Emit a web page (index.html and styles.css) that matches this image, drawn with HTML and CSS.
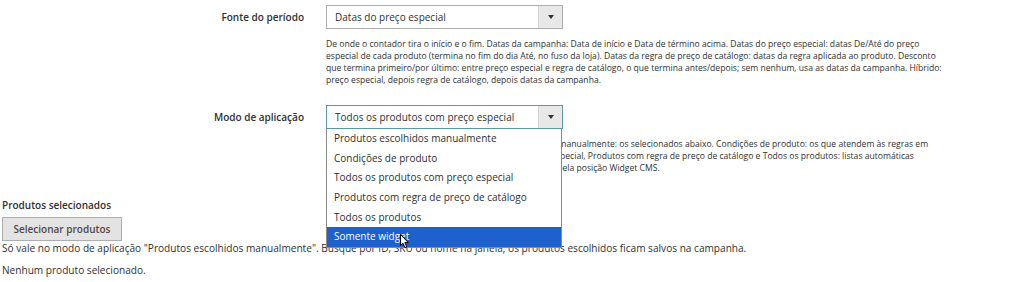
FILE: index.html
```html
<!DOCTYPE html>
<html lang="pt-BR">
<head>
<meta charset="UTF-8">
<title>Campanha - produtos</title>
<link rel="stylesheet" href="styles.css">
</head>
<body>
<div class="form">
    <div class="field">
        <div class="field-label">Fonte do período</div>
        <div class="field-control">
            <div class="select">
                <span class="select-value">Datas do preço especial</span>
                <span class="select-arrow"></span>
            </div>
            <div class="note">De onde o contador tira o início e o fim. Datas da campanha: Data de início e Data de término acima. Datas do preço especial: datas De/Até do preço especial de cada produto (termina no fim do dia Até, no fuso da loja). Datas da regra de preço de catálogo: datas da regra aplicada ao produto. Desconto que termina primeiro/por último: entre preço especial e regra de catálogo, o que termina antes/depois; sem nenhum, usa as datas da campanha. Híbrido: preço especial, depois regra de catálogo, depois datas da campanha.</div>
        </div>
    </div>

    <div class="field field-mode">
        <div class="field-label">Modo de aplicação</div>
        <div class="field-control">
            <div class="select select-focus">
                <span class="select-value">Todos os produtos com preço especial</span>
                <span class="select-arrow"></span>
            </div>
            <div class="note">Como os produtos entram na oferta. Produtos escolhidos manualmente: os selecionados abaixo. Condições de produto: os que atendem às regras em condições definidas aqui. Todos os produtos com preço especial, Produtos com regra de preço de catálogo e Todos os produtos: listas automáticas conforme o preço da loja. Somente widget: itens exibidos pela posição Widget CMS.</div>
            <ul class="options">
                <li>Produtos escolhidos manualmente</li>
                <li>Condições de produto</li>
                <li>Todos os produtos com preço especial</li>
                <li>Produtos com regra de preço de catálogo</li>
                <li>Todos os produtos</li>
                <li class="active">Somente widget</li>
            </ul>
            <svg class="cursor" width="10" height="15" viewBox="0 0 10 15">
                <path d="M0.5 0.5 L0.5 11.5 L3 9.2 L5 13.8 L6.8 13 L4.9 8.6 L8.3 8.6 Z" fill="#fff" stroke="#000" stroke-width="1"/>
            </svg>
        </div>
    </div>

    <div class="products">
        <div class="products-title">Produtos selecionados</div>
        <button class="btn">Selecionar produtos</button>
        <div class="products-note">Só vale no modo de aplicação "Produtos escolhidos manualmente". Busque por ID, SKU ou nome na janela; os produtos escolhidos ficam salvos na campanha.</div>
        <div class="products-empty">Nenhum produto selecionado.</div>
    </div>
</div>
</body>
</html>
```

FILE: styles.css
```css
*{ padding:0; margin:0; box-sizing:border-box;}
body{
    font-family: "Open Sans", "Liberation Sans", sans-serif;
    color: #303030;
    background: #fff;
    padding: 0 2px;
}
.field{
    display: grid;
    grid-template-columns: 302px 237px;
    column-gap: 22px;
    padding-top: 5px;
}
.field-mode{
    padding-top: 19px;
}
.field-label{
    text-align: right;
    font-size: 10px;
    font-weight: 600;
    line-height: 24px;
    color: #303030;
}
.field-control{
    position: relative;
}
.select{
    display: flex;
    height: 24px;
    border: 1px solid #adadad;
    background: #fff;
    font-size: 10px;
    line-height: 22px;
}
.select-focus{
    border-color: #5a98a6;
}
.select-value{
    flex: 1;
    padding-left: 8px;
    color: #303030;
}
.select-arrow{
    width: 24px;
    background: #e8e8e8;
    border-left: 1px solid #d4d4d4;
    position: relative;
}
.select-arrow:after{
    content: "";
    position: absolute;
    left: 9px;
    top: 9px;
    border-left: 3px solid transparent;
    border-right: 3px solid transparent;
    border-top: 4px solid #333;
}
.note{
    width: 625px;
    margin-top: 9px;
    font-size: 8.6px;
    line-height: 12px;
    color: #303030;
}
.options{
    list-style: none;
    position: absolute;
    top: 24px;
    left: 0;
    width: 236px;
    background: #fff;
    border: 1px solid #8a8a8a;
    border-top: none;
    font-size: 10px;
}
.options li{
    height: 19.7px;
    line-height: 19.7px;
    padding-left: 7px;
    color: #303030;
}
.options li.active{
    background: #1e60cc;
    color: #fff;
}
.cursor{
    position: absolute;
    left: 74px;
    top: 129px;
}
.products{
    padding-top: 24px;
}
.products-title{
    font-size: 10px;
    font-weight: 600;
    line-height: 14px;
}
.btn{
    display: block;
    margin-top: 5px;
    width: 120px;
    height: 24px;
    background: #e3e3e3;
    border: 1px solid #adadad;
    font-family: "Open Sans", "Liberation Sans", sans-serif;
    font-size: 10px;
    font-weight: 600;
    color: #514943;
}
.products-note{
    font-size: 10.1px;
    line-height: 15px;
}
.products-empty{
    margin-top: 6px;
    font-size: 10.1px;
    line-height: 16px;
}
```
